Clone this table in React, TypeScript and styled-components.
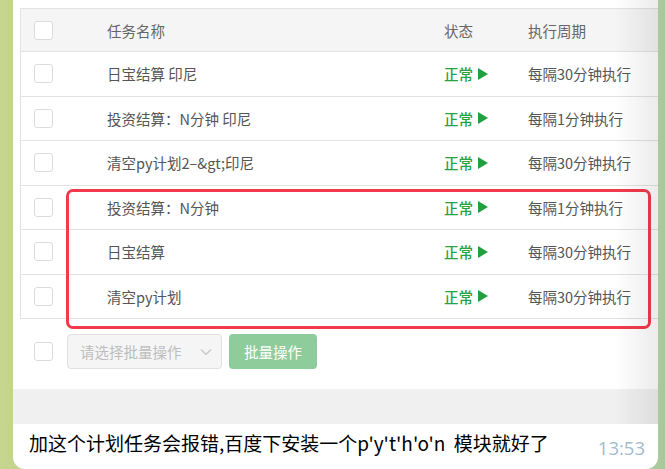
import styled, { createGlobalStyle } from "styled-components";

const GlobalStyle = createGlobalStyle`
  html, body {
    margin: 0;
    padding: 0;
    overflow: hidden;
  }
  body {
    width: 665px;
    height: 469px;
    background: linear-gradient(90deg, #c8d68e 0, #c2d48d 13px, #aac99c 658px, #a8c89b 665px);
    font-family: "Noto Sans CJK SC", "Noto Sans", sans-serif;
  }
`;

const COLS = "86px 337px 84px 1fr";

const S = {
  Page: styled.div`
    height: 469px;
    padding: 0 7px 0 13px;
    box-sizing: border-box;
    display: flex;
  `,
  Bubble: styled.div`
    flex: 1;
    background: #fff;
    border-radius: 0 0 12px 12px;
    overflow: hidden;
    display: flex;
    flex-direction: column;
  `,
  Shot: styled.div`
    position: relative;
    height: 424px;
    background: #fff;
    display: flex;
    flex-direction: column;
    padding-top: 8px;
    box-sizing: border-box;
  `,
  Table: styled.div`
    margin-left: 7px;
    border-top: 1px solid #e2e2e2;
    border-left: 1px solid #e2e2e2;
  `,
  Row: styled.div<{ $head?: boolean }>`
    display: grid;
    grid-template-columns: ${COLS};
    align-items: center;
    height: ${({ $head }) => ($head ? "42px" : "43.5px")};
    background: ${({ $head }) => ($head ? "#f5f5f5" : "#fff")};
    border-bottom: 1px solid #e2e2e2;
    font-size: 14.5px;
    color: ${({ $head }) => ($head ? "#666" : "#555")};
  `,
  CheckCell: styled.div`
    padding-left: 13px;
    display: flex;
    align-items: center;
  `,
  Check: styled.span`
    display: block;
    width: 17px;
    height: 17px;
    border: 1px solid #dcdcdc;
    border-radius: 3px;
    background: #fff;
  `,
  Cell: styled.div`
    white-space: nowrap;
  `,
  Status: styled.div`
    color: #27a243;
    font-weight: 500;
    display: flex;
    align-items: center;
    gap: 5px;
  `,
  Play: styled.span`
    width: 0;
    height: 0;
    border-top: 6.5px solid transparent;
    border-bottom: 6.5px solid transparent;
    border-left: 10px solid #22a040;
  `,
  Bar: styled.div`
    display: flex;
    align-items: center;
    margin-top: 15px;
    padding-left: 21px;
    gap: 7px;
  `,
  BarCheck: styled.div`
    width: 26px;
    display: flex;
    align-items: center;
  `,
  Select: styled.div`
    width: 155px;
    height: 35px;
    box-sizing: border-box;
    background: #f5f5f5;
    border: 1px solid #e0e0e0;
    border-radius: 4px;
    display: flex;
    align-items: center;
    justify-content: space-between;
    padding: 0 9px 0 12px;
    font-size: 14.5px;
    color: #bdbdbd;
  `,
  Button: styled.div`
    width: 88px;
    height: 35px;
    border-radius: 4px;
    background: #8ecd9b;
    color: #fff;
    font-size: 14.5px;
    display: flex;
    align-items: center;
    justify-content: center;
  `,
  Band: styled.div`
    margin-top: auto;
    height: 35px;
    background: #f0f0f0;
  `,
  Fade: styled.div`
    position: absolute;
    top: 0;
    right: 0;
    bottom: 0;
    width: 44px;
    background: linear-gradient(90deg, rgba(0, 0, 0, 0), rgba(0, 0, 0, 0.08));
    pointer-events: none;
  `,
  Highlight: styled.div`
    position: absolute;
    left: 53px;
    top: 189px;
    width: 585px;
    height: 140px;
    box-sizing: border-box;
    border: 3px solid #f23a4c;
    border-radius: 7px;
  `,
  Caption: styled.div`
    flex: 1;
    display: flex;
    align-items: flex-end;
    justify-content: space-between;
    padding: 0 13px 9px 16px;
  `,
  Text: styled.div`
    font-family: "Noto Sans CJK SC", "Noto Sans", sans-serif;
    font-size: 19px;
    color: #000;
    white-space: pre;
    margin-bottom: 4px;
  `,
  Time: styled.div`
    font-family: "Open Sans", "Noto Sans", sans-serif;
    font-size: 18.5px;
    color: #a2bccd;
  `,
};

const rows = [
  { name: "日宝结算 印尼", period: "每隔30分钟执行" },
  { name: "投资结算：N分钟 印尼", period: "每隔1分钟执行" },
  { name: "清空py计划2–&gt;印尼", period: "每隔30分钟执行" },
  { name: "投资结算：N分钟", period: "每隔1分钟执行" },
  { name: "日宝结算", period: "每隔30分钟执行" },
  { name: "清空py计划", period: "每隔30分钟执行" },
];

const Chevron = () => (
  <svg width="12" height="8" viewBox="0 0 12 8">
    <path d="M1 1.5 L6 6.5 L11 1.5" fill="none" stroke="#c4c4c4" strokeWidth="1.2" />
  </svg>
);

export default function App() {
  return (
    <>
      <GlobalStyle />
      <S.Page>
        <S.Bubble>
          <S.Shot>
            <S.Table>
              <S.Row $head>
                <S.CheckCell>
                  <S.Check />
                </S.CheckCell>
                <S.Cell>任务名称</S.Cell>
                <S.Cell>状态</S.Cell>
                <S.Cell>执行周期</S.Cell>
              </S.Row>
              {rows.map((r, i) => (
                <S.Row key={i}>
                  <S.CheckCell>
                    <S.Check />
                  </S.CheckCell>
                  <S.Cell>{r.name}</S.Cell>
                  <S.Status>
                    正常 <S.Play />
                  </S.Status>
                  <S.Cell>{r.period}</S.Cell>
                </S.Row>
              ))}
            </S.Table>
            <S.Bar>
              <S.BarCheck>
                <S.Check />
              </S.BarCheck>
              <S.Select>
                请选择批量操作
                <Chevron />
              </S.Select>
              <S.Button>批量操作</S.Button>
            </S.Bar>
            <S.Band />
            <S.Highlight />
            <S.Fade />
          </S.Shot>
          <S.Caption>
            <S.Text>加这个计划任务会报错,百度下安装一个p'y't'h'o'n  模块就好了</S.Text>
            <S.Time>13:53</S.Time>
          </S.Caption>
        </S.Bubble>
      </S.Page>
    </>
  );
}
